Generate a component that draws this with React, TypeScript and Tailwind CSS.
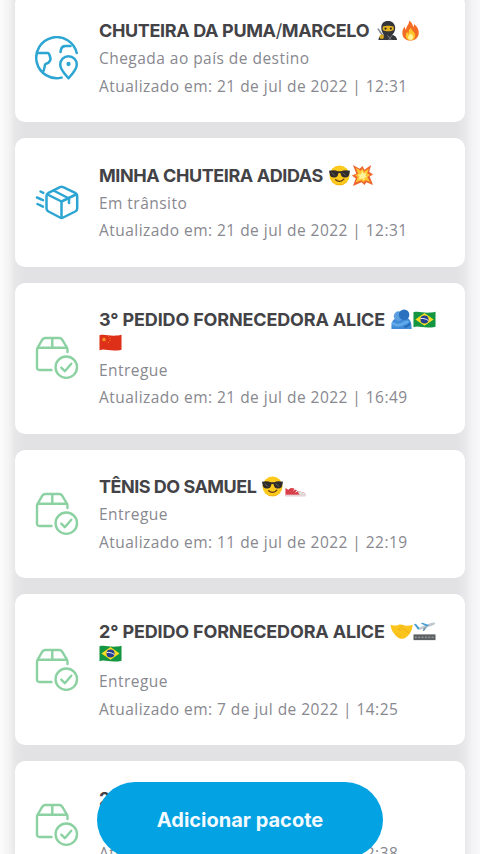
import React from "react";

type PackageStatus = "arrived" | "transit" | "delivered";

interface PackageItem {
  id: number;
  status: PackageStatus;
  title: React.ReactNode;
  titleClass: string;
  emojis: React.ReactNode;
  secondLine?: React.ReactNode;
  label: string;
  updatedAt: string;
}

function Emoji({ children, label }: { children: React.ReactNode; label: string }) {
  return (
    <svg viewBox="0 0 24 24" className="h-[23px] w-[23px] shrink-0" role="img" aria-label={label}>
      {children}
    </svg>
  );
}

function Ninja() {
  return (
    <Emoji label="ninja">
      <path d="M2.5 22c.3-4 3-6 9.500-6s9.500 2 10 6z" fill="#35373b" />
      <path d="M5.500 9C5.500 4.500 8 2 12.500 2S20 4.800 20 9.500 17 18 12.700 18 5.500 14 5.500 9z" fill="#33353a" />
      <path d="M7 8.200c3-1.400 8.500-1.400 11.500 0v3.300c-3 1.700-8.500 1.700-11.500 0z" fill="#e5b21d" />
      <circle cx="10" cy="10" r="1.100" fill="#292929" />
      <circle cx="15.500" cy="10" r="1.100" fill="#292929" />
      <path d="M2 10l5.500 8" stroke="#84878a" strokeWidth="1.600" />
      <circle cx="6" cy="18.500" r="2.300" fill="#d8a91d" />
      <path d="M12 17l4 5M17 17l-4 5" stroke="#777b80" strokeWidth="1" />
    </Emoji>
  );
}

function Fire() {
  return (
    <Emoji label="fire">
      <path d="M10.500 1.500c2.500 1.200 4 4.500 4.300 7 .7-1 1-2.100.8-3.400 3.500 2.500 5.400 6.200 5 10-.4 4.400-3.800 7.400-8.400 7.400-5 0-8.500-3-8.700-7.500-.1-3.100 1-5.500 2.400-7.300.1 1.500.6 2.700 1.500 3.500C7.300 7.300 11 5.500 10.500 1.500z" fill="#f46b23" />
      <path d="M12.300 9c.7 3 4.600 4.500 4.600 8.200 0 3-2 5-4.800 5s-5-2-5-4.800c0-1.700.7-3 1.600-4 .2 1 .7 1.600 1.400 1.900-.3-2.700.6-4.700 2.200-6.300z" fill="#ffc52c" />
      <path d="M12.200 15c1.500 1.300 2.500 2.300 2.500 4 0 1.500-1.100 2.700-2.600 2.700S9.500 20.700 9.500 19c0-1.600 1.500-2.500 2.700-4z" fill="#fff29b" />
    </Emoji>
  );
}

function Sunglasses() {
  return (
    <Emoji label="sunglasses">
      <circle cx="12" cy="12" r="10.500" fill="#fcc91d" />
      <path d="M3 16c2 7.500 16 7.500 18 0-2 8-16 8-18 0z" fill="#e89d14" />
      <path d="M1 7c4-.9 7-.7 9.200.5h3.600C16 6.300 19 6.100 23 7l-.5 2.200c-.5 3.500-1.600 5-4.800 5-3 0-4-1.500-4.700-4.700h-2c-.7 3.200-1.700 4.700-4.700 4.700-3.200 0-4.300-1.500-4.800-5z" fill="#302c2b" />
      <path d="M4 9l3 3M15.500 9l3 3" stroke="#746c64" strokeWidth="1" />
      <path d="M8 16.500c2.500 2.300 6 2.100 8.500-.7" fill="none" stroke="#633817" strokeWidth="1.400" strokeLinecap="round" />
    </Emoji>
  );
}

function Collision() {
  return (
    <Emoji label="collision">
      <path d="M2 1l7 4 3-3 2 4 7-5-2 7 4 3-3.500 2L23 22l-7-3-2 3-3-3-9 4 3-8-4-3 4.500-2z" fill="#ee652d" />
      <path d="M5 4l5 3 2-2 1.500 3 5-3-1.500 5 3 1.500-3 2 3 5-5-1.500-2 2-2-2-6 2 2-5.500-3-2 3.500-1z" fill="#ffc633" />
      <path d="M12 7l1 3 3-1-1 3 2 1.500-3 .5v3l-2.500-2L8 16l1-3-2-2h3z" fill="#fff39b" />
    </Emoji>
  );
}

function Hug() {
  return (
    <Emoji label="people hugging">
      <path d="M1.500 22c-.3-7 1-10 5-11l12-.5c3 2 4 5.500 4 11.500z" fill="#3f8bd8" />
      <circle cx="9" cy="8.500" r="5" fill="#5c9fdf" />
      <circle cx="14.700" cy="7" r="5.500" fill="#2a72bf" />
      <path d="M3 16c4 3 8 2.500 12-.5l3-1" fill="none" stroke="#62a9ea" strokeWidth="3" strokeLinecap="round" />
      <path d="M15 20c3-.5 5-2 6-4" fill="none" stroke="#256ab7" strokeWidth="2" />
    </Emoji>
  );
}

function Brazil() {
  return (
    <Emoji label="Brazil">
      <path d="M.5 4.500c6-2 11 2 23-.5v15.500c-12 2.500-17-1.500-23 .5z" fill="#149541" />
      <path d="M12 5.200l9.500 6.700-9.500 6.500-9.500-6.500z" fill="#f9dc26" />
      <circle cx="12" cy="12" r="4.200" fill="#263f91" />
      <path d="M8 11c3-.4 6 .4 8 2.200" fill="none" stroke="#f5f5f5" strokeWidth="1" />
    </Emoji>
  );
}

function China() {
  return (
    <Emoji label="China">
      <path d="M.5 4.500c6-2 11 2 23-.5v15.500c-12 2.500-17-1.500-23 .5z" fill="#de2f18" />
      <path d="M5.200 6l.8 2h2L6.400 9.200l.6 2-1.800-1.200-1.800 1.200.6-2L2.400 8h2z" fill="#f9a52c" />
      <path d="M9.500 5.500h1M11 7.500h1M11 10h1M9.500 12h1" stroke="#f38a2b" strokeWidth="1" />
    </Emoji>
  );
}

function Shoe() {
  return (
    <Emoji label="running shoe">
      <path d="M1.500 13.500l3 1.800 2.500-1.800 3 .3 4 3 5.500 1.200c2.500.6 3 1.800 3 3.500H1.500z" fill="#d83f4b" />
      <path d="M14 16.800l5.500 1.200c2.500.6 3 1.800 3 3h-6z" fill="#dedede" />
      <path d="M1.500 20.500h21v2h-21z" fill="#e7d5d7" />
      <path d="M10 16l2-1.500M12 18l2-1.500" stroke="#fff" strokeWidth="1" />
    </Emoji>
  );
}

function Handshake() {
  return (
    <Emoji label="handshake">
      <path d="M.5 5c3 1 5.500 1 8 .2 2-.7 4-.6 6 .2 3 1 5.500.7 9-.4-.2 6-2.500 9.500-6 12.500-3.800 3.200-7.500 2.500-10.500-.4C3.500 14 1 10.500.5 5z" fill="#fbc51d" />
      <path d="M14 6c-2 0-4 2-5 4 2 1 4 0 5-1l6 5M6 16l2-2m1 4 2-2" fill="none" stroke="#eaad18" strokeWidth="1" />
    </Emoji>
  );
}

function PlaneArrival() {
  return (
    <Emoji label="airplane arrival">
      <path d="M5 8.500l13-5c2-.9 4.800-1.200 5-.2.100 1-1.500 2-3.500 2.600L8 10c-2 .6-3 .2-3-1.500z" fill="#bdc8cf" />
      <path d="M1 4.500l2-.5L7 8.500l-2 1.500zM8 3.500l2-.6L17 5.500l-3 1.300z" fill="#45a0d5" />
      <path d="M11 8.500l4-2-3 4.500-2 .7z" fill="#7793a5" />
      <rect x=".5" y="15" width="23" height="6" fill="#5d6164" />
      <path d="M2 18h20" stroke="#a9adaf" strokeWidth="1.200" strokeDasharray="2 1.500" />
    </Emoji>
  );
}

function StatusIcon({ status }: { status: PackageStatus }) {
  if (status === "arrived") {
    return (
      <svg viewBox="0 0 44 44" className="h-11 w-11" fill="none" stroke="#2da5d2" strokeWidth="2.500" strokeLinecap="round" strokeLinejoin="round">
        <path d="M41.700 17A20.500 20.500 0 1 0 26.500 41.600" />
        <path d="M2 17h10.500c2 0 2 2.500 2.700 4.200.8 2-.2 4-1.600 5.300-1.500 1.400-3.400.8-3.700 2.500-.5 3-.5 5.500-2.300 7" />
        <path d="M35.500 10h-5c-2.500 0-4 1.200-4.500 3.500l-.5 2.500" />
        <path d="M33.500 42.300c-1-1.500-8.300-8-8.300-13.800a8.300 8.300 0 0 1 16.600 0c0 5.800-7.300 12.300-8.300 13.800z" />
        <circle cx="33.500" cy="28" r=".9" fill="#2da5d2" />
      </svg>
    );
  }
  if (status === "transit") {
    return (
      <svg viewBox="0 0 44 44" className="h-11 w-11" fill="none" stroke="#2da5d2" strokeWidth="2.500" strokeLinecap="round" strokeLinejoin="round">
        <path d="M25 7.200c1-.6 2.200-.6 3.200 0l12 5.600c1.300.6 2 1.700 2 3v12.700c0 1.400-.7 2.300-2 3l-12 6c-1 .5-2.200.5-3.200 0l-11.500-6c-1.300-.7-2-1.600-2-3V15.800c0-1.300.7-2.400 2-3z" />
        <path d="M12.500 14.500l14 7 14.500-7M26.500 21.500V37M18.500 10.500l15.500 8v4.500" />
        <path d="M5.500 11.500l2.800 1.400M2 17.500l6 2.700M2.500 24l5.500 2.700" />
      </svg>
    );
  }
  return (
    <svg viewBox="0 0 44 44" className="h-11 w-11" fill="none" stroke="#8bd1a1" strokeWidth="2.400" strokeLinecap="round" strokeLinejoin="round">
      <path d="M16.500 34H4.500c-1.800 0-2.500-1-2.500-2.500V14c0-1 .3-1.800.8-2.500L7 4.200C7.700 2.700 8.600 2 10 2h14.500c1.400 0 2.300.7 3 2.200l4.300 7.300c.5.700.7 1.500.7 2.500V16" />
      <path d="M3 11.700h29M17.300 2.200v9.300" />
      <circle cx="31.300" cy="31.200" r="10.700" />
      <path d="M26.300 31.700l3.500 3.500 6.500-7.500" />
    </svg>
  );
}

const packages: PackageItem[] = [
  {
    id: 1,
    status: "arrived",
    title: <>CHUTEIRA DA PUMA<span className="font-normal">/</span>MARCELO</>,
    titleClass: "w-[277px] tracking-[-0.360px]",
    emojis: <><Ninja /><Fire /></>,
    label: "Chegada ao país de destino",
    updatedAt: "21 de jul de 2022 | 12:31",
  },
  {
    id: 2,
    status: "transit",
    title: "MINHA CHUTEIRA ADIDAS",
    titleClass: "w-[229px] tracking-[-0.430px]",
    emojis: <><Sunglasses /><Collision /></>,
    label: "Em trânsito",
    updatedAt: "21 de jul de 2022 | 12:31",
  },
  {
    id: 3,
    status: "delivered",
    title: "3° PEDIDO FORNECEDORA ALICE",
    titleClass: "w-[291px] tracking-[-0.160px]",
    emojis: <><Hug /><Brazil /></>,
    secondLine: <China />,
    label: "Entregue",
    updatedAt: "21 de jul de 2022 | 16:49",
  },
  {
    id: 4,
    status: "delivered",
    title: "TÊNIS DO SAMUEL",
    titleClass: "w-[162px] tracking-[-0.500px]",
    emojis: <><Sunglasses /><Shoe /></>,
    label: "Entregue",
    updatedAt: "11 de jul de 2022 | 22:19",
  },
  {
    id: 5,
    status: "delivered",
    title: "2° PEDIDO FORNECEDORA ALICE",
    titleClass: "w-[291px] tracking-[-0.160px]",
    emojis: <><Handshake /><PlaneArrival /></>,
    secondLine: <Brazil />,
    label: "Entregue",
    updatedAt: "7 de jul de 2022 | 14:25",
  },
  {
    id: 6,
    status: "delivered",
    title: "2° PEDIDO",
    titleClass: "w-[120px] tracking-[-0.160px]",
    emojis: null,
    label: "Entregue",
    updatedAt: "7 de jul de 2022 | 12:38",
  },
];

function PackageCard({ item }: { item: PackageItem }) {
  return (
    <div className="flex items-center rounded-[10px] bg-white pl-5">
      <StatusIcon status={item.status} />
      <div className="ml-5 pt-[26px] pb-[22px]">
        <div className="mb-[3px]">
          <div className="flex h-[22.500px] items-center">
            <h2 className={`${item.titleClass} shrink-0 whitespace-nowrap font-[Inter,sans-serif] text-[18px] font-bold text-[#434347]`}>
              {item.title}
            </h2>
            {item.emojis}
          </div>
          {item.secondLine && <div className="flex h-[22.500px] items-center">{item.secondLine}</div>}
        </div>
        <p className="whitespace-nowrap text-[15.500px] leading-[27.500px] tracking-[0.460px] text-[#88888f]">{item.label}</p>
        <p className="whitespace-nowrap text-[15.500px] leading-[27.500px] tracking-[0.460px] text-[#88888f]">
          Atualizado em: {item.updatedAt}
        </p>
      </div>
    </div>
  );
}

export default function App() {
  return (
    <div className="relative h-[854px] w-[480px] overflow-hidden bg-[linear-gradient(to_right,#fcfcfc_0px,#f3f3f3_9px,#e7e7e9_15px,#e2e2e4_24px,#e2e2e4_456px,#e8e8eb_465px,#f3f2f5_472px,#f8f7f9_480px)] font-['Open_Sans',sans-serif]">
      <div className="-mt-[6.500px] flex flex-col gap-4 px-[15px]">
        {packages.map((item) => (
          <PackageCard key={item.id} item={item} />
        ))}
      </div>
      <button className="absolute top-[782px] left-[97px] h-[76px] w-[286px] rounded-full bg-[#03a2e3] font-[Inter,sans-serif] text-[20px] font-bold text-[#f2faff]">
        Adicionar pacote
      </button>
    </div>
  );
}
